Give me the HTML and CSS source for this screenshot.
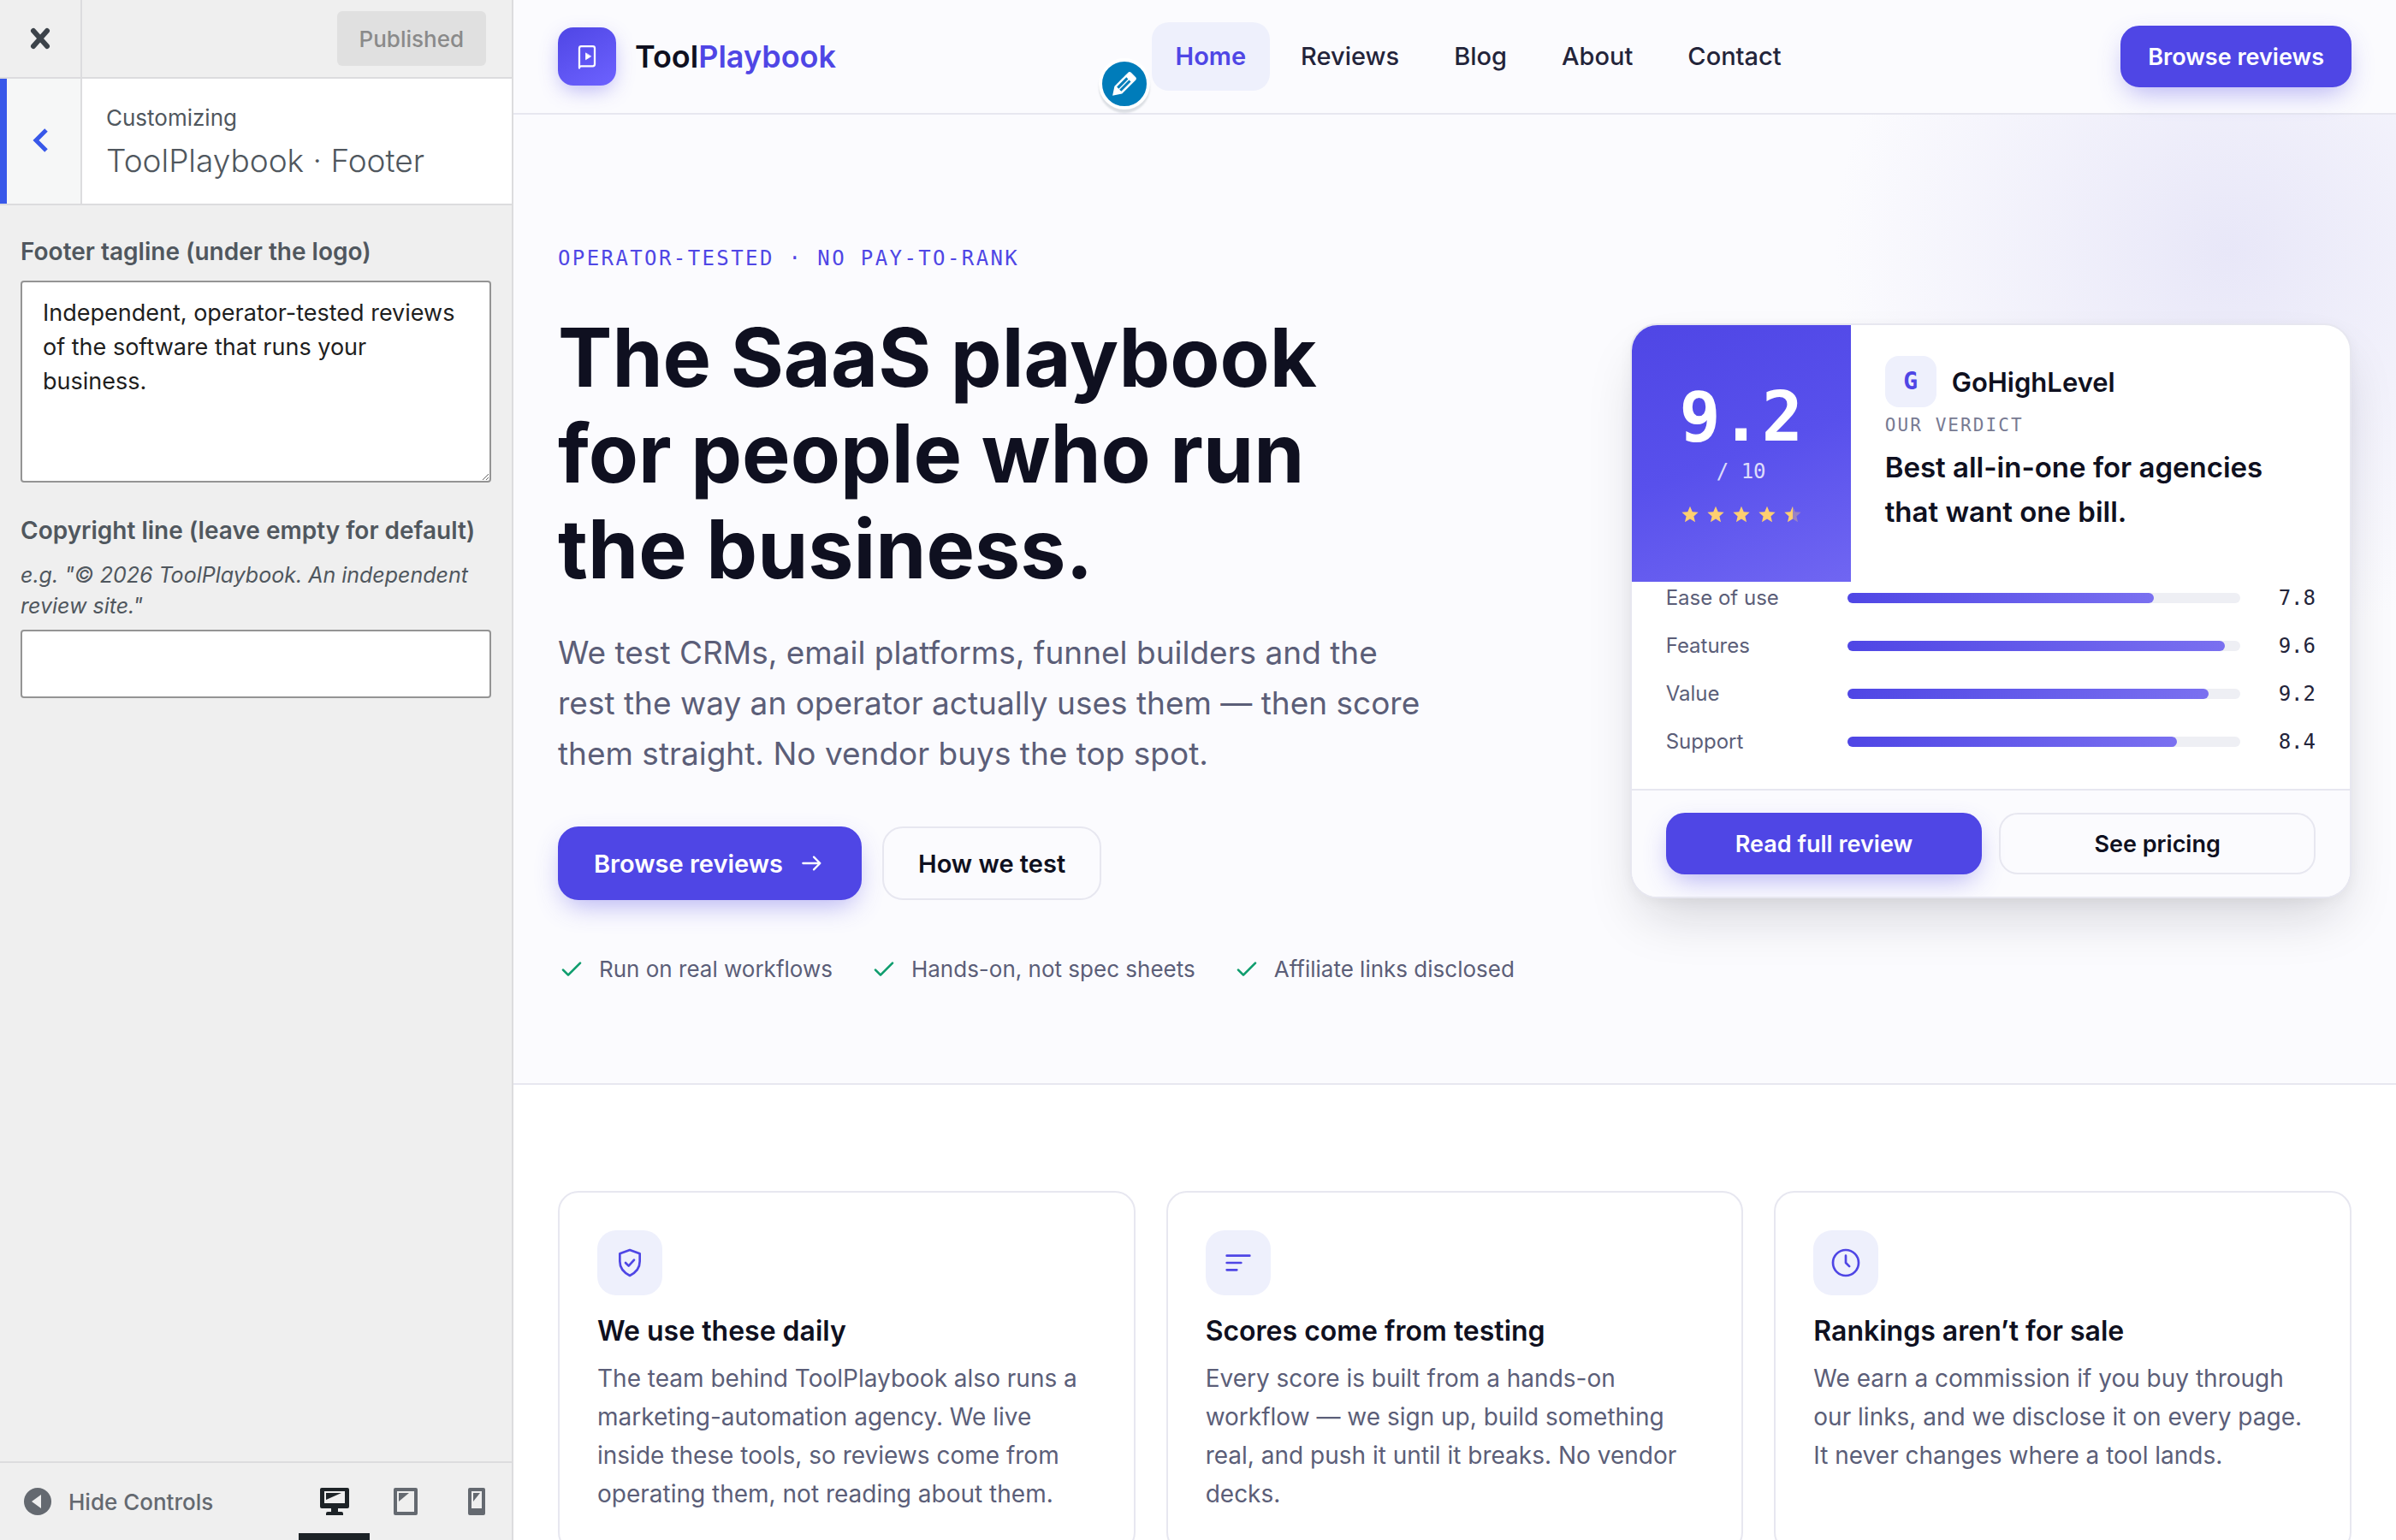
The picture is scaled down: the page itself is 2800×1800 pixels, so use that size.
FILE: index.html
```html
<!DOCTYPE html>
<html lang="en">
<head>
    <meta charset="UTF-8">
    <meta name="viewport" content="width=device-width, initial-scale=1.0">
    <title>Customize: ToolPlaybook</title>
    <link rel="stylesheet" href="styles.css">
</head>
<body>

    <!-- Customizer sidebar -->
    <aside class="controls">
        <div class="controls-top">
            <button type="button" class="close-btn" aria-label="Close">
                <svg width="26" height="28" viewBox="0 0 26 28"><path d="M5 5l16 18M21 5L5 23" stroke="currentColor" stroke-width="6" stroke-linecap="round" fill="none"/></svg>
            </button>
            <button type="button" class="publish-btn" disabled>Published</button>
        </div>

        <div class="section-head">
            <button type="button" class="back-btn" aria-label="Back">
                <svg width="20" height="30" viewBox="0 0 20 30"><path d="M17 3L5 15l12 12" stroke="currentColor" stroke-width="5" fill="none"/></svg>
            </button>
            <div class="section-title">
                <span>Customizing</span>
                <h3>ToolPlaybook · Footer</h3>
            </div>
        </div>

        <form class="fields">
            <div class="field">
                <label for="tagline">Footer tagline (under the logo)</label>
                <textarea id="tagline">Independent, operator-tested reviews of the software that runs your business.</textarea>
            </div>
            <div class="field">
                <label for="copyright">Copyright line (leave empty for default)</label>
                <p class="hint">e.g. "© 2026 ToolPlaybook. An independent review site."</p>
                <input type="text" id="copyright">
            </div>
        </form>

        <div class="controls-footer">
            <button type="button" class="collapse-btn">
                <svg width="32" height="32" viewBox="0 0 32 32"><circle cx="16" cy="16" r="16" fill="currentColor"/><path d="M20 8v16L9 16z" fill="#efefef"/></svg>
                Hide Controls
            </button>
            <div class="devices">
                <button type="button" class="device active" aria-label="Desktop preview">
                    <svg width="34" height="32" viewBox="0 0 34 32"><path fill="currentColor" fill-rule="evenodd" d="M2 0h30q2 0 2 2v20q0 2-2 2H21v4h4q2 0 2 2v2H7v-2q0-2 2-2h4v-4H2q-2 0-2-2V2q0-2 2-2zM5 4v14h24V4z"/><path fill="currentColor" d="M7 6h18L7 14z"/></svg>
                </button>
                <button type="button" class="device" aria-label="Tablet preview">
                    <svg width="28" height="32" viewBox="0 0 28 32"><path fill="currentColor" fill-rule="evenodd" d="M2 0h24q2 0 2 2v28q0 2-2 2H2q-2 0-2-2V2q0-2 2-2zM4 4v24h20V4z"/><path fill="currentColor" d="M6 6h12L6 16z"/></svg>
                </button>
                <button type="button" class="device" aria-label="Mobile preview">
                    <svg width="20" height="32" viewBox="0 0 20 32"><path fill="currentColor" fill-rule="evenodd" d="M2 0h16q2 0 2 2v28q0 2-2 2H2q-2 0-2-2V2q0-2 2-2zM4 4v20h12V4z"/><path fill="currentColor" d="M6 6h8L6 16z"/></svg>
                </button>
            </div>
        </div>
    </aside>

    <!-- Site preview -->
    <div class="preview">
        <header class="site-header">
            <a href="#" class="brand">
                <span class="brand-mark">
                    <svg width="36" height="36" viewBox="0 0 24 24" fill="none" stroke="#fff" stroke-width="1.500" stroke-linecap="round" stroke-linejoin="round"><path d="M6 21V5.500A1.500 1.500 0 0 1 7.500 4h9A1.500 1.500 0 0 1 18 5.500V18a1.500 1.500 0 0 1-1.500 1.500h-9A1.500 1.500 0 0 0 6 21z"/><path d="M11 9.500v5l4-2.500z" fill="#fff" stroke-width=".500"/></svg>
                </span>
                <span class="brand-name">Tool<b>Playbook</b></span>
            </a>
            <nav class="site-nav">
                <button type="button" class="edit-badge" aria-label="Edit menu">
                    <svg width="40" height="40" viewBox="0 0 20 20"><path fill="#fff" d="M13.890 3.390l2.710 2.720c.46.46.42 1.240.03 1.640l-8.010 8.020-5.560 1.160 1.160-5.580s7.600-7.630 7.990-8.030c.39-.39 1.220-.39 1.680.07zm-2.730 2.790l-5.590 5.610 1.110 1.110 5.540-5.650zm-2.970 8.230l5.580-5.600-1.070-1.080-5.590 5.600z"/></svg>
                </button>
                <a href="#" class="current">Home</a>
                <a href="#">Reviews</a>
                <a href="#">Blog</a>
                <a href="#">About</a>
                <a href="#">Contact</a>
            </nav>
            <a href="#" class="btn btn-primary">Browse reviews</a>
        </header>

        <section class="hero">
            <div class="hero-copy">
                <p class="eyebrow">Operator-tested · No pay-to-rank</p>
                <h1>The SaaS playbook<br>for people who run<br>the business.</h1>
                <p class="lead">We test CRMs, email platforms, funnel builders and the rest the way an operator actually uses them — then score them straight. No vendor buys the top spot.</p>
                <div class="hero-actions">
                    <a href="#" class="btn btn-primary btn-lg">Browse reviews
                        <svg width="32" height="32" viewBox="0 0 24 24" fill="none" stroke="currentColor" stroke-width="1.700" stroke-linecap="round" stroke-linejoin="round"><path d="M4 12h15M13.500 6.500L19 12l-5.500 5.500"/></svg>
                    </a>
                    <a href="#" class="btn btn-outline btn-lg">How we test</a>
                </div>
                <ul class="proof">
                    <li><svg width="32" height="32" viewBox="0 0 24 24"><path d="M4.500 12.500l4.500 4.500L19.500 6.500"/></svg>Run on real workflows</li>
                    <li><svg width="32" height="32" viewBox="0 0 24 24"><path d="M4.500 12.500l4.500 4.500L19.500 6.500"/></svg>Hands-on, not spec sheets</li>
                    <li><svg width="32" height="32" viewBox="0 0 24 24"><path d="M4.500 12.500l4.500 4.500L19.500 6.500"/></svg>Affiliate links disclosed</li>
                </ul>
            </div>

            <article class="verdict">
                <div class="verdict-top">
                    <div class="score">
                        <strong>9.2</strong>
                        <span>/ 10</span>
                        <div class="stars">
                            <svg viewBox="0 0 24 24"><path d="M12 2l3 7 7.500.600-5.700 5 1.800 7.400-6.600-4-6.600 4 1.800-7.400-5.700-5L9 9z"/></svg>
                            <svg viewBox="0 0 24 24"><path d="M12 2l3 7 7.500.600-5.700 5 1.800 7.400-6.600-4-6.600 4 1.800-7.400-5.700-5L9 9z"/></svg>
                            <svg viewBox="0 0 24 24"><path d="M12 2l3 7 7.500.600-5.700 5 1.800 7.400-6.600-4-6.600 4 1.800-7.400-5.700-5L9 9z"/></svg>
                            <svg viewBox="0 0 24 24"><path d="M12 2l3 7 7.500.600-5.700 5 1.800 7.400-6.600-4-6.600 4 1.800-7.400-5.700-5L9 9z"/></svg>
                            <svg viewBox="0 0 24 24"><path opacity=".35" d="M12 2l3 7 7.500.600-5.700 5 1.800 7.400-6.600-4z"/><path d="M12 2v16l-6.600 4 1.800-7.400-5.700-5L9 9z"/></svg>
                        </div>
                    </div>
                    <div class="verdict-body">
                        <div class="tool"><span class="tool-logo">G</span><span class="tool-name">GoHighLevel</span></div>
                        <p class="verdict-label">Our verdict</p>
                        <p class="verdict-text">Best all-in-one for agencies<br>that want one bill.</p>
                    </div>
                </div>
                <div class="ratings">
                    <div class="rating"><span>Ease of use</span><div class="bar"><i style="width: 78%"></i></div><b>7.8</b></div>
                    <div class="rating"><span>Features</span><div class="bar"><i style="width: 96%"></i></div><b>9.6</b></div>
                    <div class="rating"><span>Value</span><div class="bar"><i style="width: 92%"></i></div><b>9.2</b></div>
                    <div class="rating"><span>Support</span><div class="bar"><i style="width: 84%"></i></div><b>8.4</b></div>
                </div>
                <div class="verdict-actions">
                    <a href="#" class="btn btn-primary">Read full review</a>
                    <a href="#" class="btn btn-outline">See pricing</a>
                </div>
            </article>
        </section>

        <section class="features">
            <article class="feature">
                <div class="feature-icon">
                    <svg viewBox="0 0 24 24"><path d="M12 3l7 2.600v5.400c0 4.600-2.900 8-7 10-4.100-2-7-5.400-7-10V5.600z"/><path d="M9 12l2.200 2.200L15 10"/></svg>
                </div>
                <h3>We use these daily</h3>
                <p>The team behind ToolPlaybook also runs a marketing-automation agency. We live inside these tools, so reviews come from operating them, not reading about them.</p>
            </article>
            <article class="feature">
                <div class="feature-icon">
                    <svg viewBox="0 0 24 24"><path d="M4 7h16M4 12h10M4 17h7"/></svg>
                </div>
                <h3>Scores come from testing</h3>
                <p>Every score is built from a hands-on workflow — we sign up, build something real, and push it until it breaks. No vendor decks.</p>
            </article>
            <article class="feature">
                <div class="feature-icon">
                    <svg viewBox="0 0 24 24"><circle cx="12" cy="12" r="9"/><path d="M12 7v5l2.500 2.500"/></svg>
                </div>
                <h3>Rankings aren’t for sale</h3>
                <p>We earn a commission if you buy through our links, and we disclose it on every page. It never changes where a tool lands.</p>
            </article>
        </section>
    </div>

</body>
</html>
```

FILE: styles.css
```css
/* General Styles */
* {
    box-sizing: border-box;
}

body {
    margin: 0;
    height: 100vh;
    display: flex;
    overflow: hidden;
    font-family: Inter, "Liberation Sans", sans-serif;
    color: #0f1020;
}

h1, h3, p, ul {
    margin: 0;
    padding: 0;
}

a {
    color: inherit;
    text-decoration: none;
}

button {
    border: 0;
    padding: 0;
    background: none;
    font-family: inherit;
    cursor: pointer;
}

svg {
    display: block;
    flex: none;
}

/* Customizer sidebar */
.controls {
    width: 600px;
    flex: none;
    display: flex;
    flex-direction: column;
    background: #efefef;
    border-right: 2px solid #dcdcde;
    color: #50575e;
}

.controls-top {
    height: 92px;
    display: flex;
    align-items: center;
    justify-content: space-between;
    padding-right: 30px;
    border-bottom: 2px solid #dcdcde;
}

.close-btn,
.back-btn {
    width: 96px;
    align-self: stretch;
    display: flex;
    align-items: center;
    justify-content: center;
    border-right: 2px solid #dcdcde;
    color: #3c434a;
}

.back-btn {
    border-left: 8px solid #3858e9;
    background: #f6f7f7;
    color: #3858e9;
    padding: 0 8px 2px 0;
}

.publish-btn {
    height: 64px;
    padding: 0 26px;
    border-radius: 6px;
    background: #e0e0e0;
    color: #8a8a8a;
    font-size: 26px;
    font-weight: 500;
}

.section-head {
    height: 148px;
    display: flex;
    background: #fff;
    border-bottom: 2px solid #dcdcde;
}

.section-title {
    padding: 26px 28px;
    font-size: 26px;
    line-height: 40px;
}

.section-title h3 {
    font-size: 37px;
    line-height: 60px;
    font-weight: 300;
}

.fields {
    flex: 1;
    padding: 32px 24px;
    display: flex;
    flex-direction: column;
    gap: 34px;
}

.field {
    display: flex;
    flex-direction: column;
}

.field label {
    font-size: 28px;
    line-height: 44px;
    font-weight: 600;
    margin-bottom: 12px;
}

.field textarea,
.field input {
    border: 2px solid #949494;
    border-radius: 4px;
    background: #fff;
    font-family: inherit;
    font-size: 27px;
    line-height: 40px;
    color: #1e1e1e;
}

.field textarea {
    height: 236px;
    padding: 16px 24px;
}

.field input {
    height: 80px;
    padding: 0 24px;
}

.hint {
    margin-bottom: 10px;
    font-size: 25px;
    line-height: 36px;
    font-style: italic;
}

.controls-footer {
    height: 92px;
    display: flex;
    justify-content: space-between;
    border-top: 2px solid #dcdcde;
    color: #646970;
}

.collapse-btn {
    display: flex;
    align-items: center;
    gap: 20px;
    padding-left: 28px;
    font-size: 26px;
    font-weight: 500;
    color: inherit;
}

.devices {
    display: flex;
}

.device {
    width: 83px;
    display: flex;
    align-items: center;
    justify-content: center;
    color: #646970;
    border-bottom: 8px solid transparent;
    padding-top: 8px;
}

.device.active {
    color: #1d2327;
    border-color: #1d2327;
}

/* Buttons */
.btn {
    display: inline-flex;
    align-items: center;
    justify-content: center;
    gap: 18px;
    height: 72px;
    padding: 0 30px;
    border: 2px solid transparent;
    border-radius: 22px;
    font-size: 27px;
    font-weight: 600;
    white-space: nowrap;
}

.btn-lg {
    height: 86px;
    padding: 0 40px;
    border-radius: 24px;
    font-size: 29px;
}

.btn-primary {
    border-color: #4f46e5;
    background: #4f46e5;
    color: #fff;
    box-shadow: 0 12px 32px -8px rgba(79, 70, 229, 0.45);
}

.btn-outline {
    border-color: #e7e7f0;
}

/* Site header */
.preview {
    flex: 1;
    min-width: 0;
    overflow: hidden;
    background: #fff;
}

.site-header {
    height: 134px;
    padding: 0 52px;
    display: flex;
    align-items: center;
    justify-content: space-between;
    background: #fbfbfe;
    border-bottom: 2px solid #e7e7f0;
}

.brand {
    display: flex;
    align-items: center;
    gap: 22px;
}

.brand-mark {
    width: 68px;
    height: 68px;
    display: flex;
    align-items: center;
    justify-content: center;
    border-radius: 18px;
    background: linear-gradient(150deg, #4f46e5, #6d62ff);
    box-shadow: 0 8px 24px -4px rgba(79, 70, 229, 0.4);
}

.brand-name {
    font-size: 36px;
    font-weight: 600;
}

.brand-name b {
    font-weight: 600;
    color: #4f46e5;
}

.site-nav {
    position: relative;
    display: flex;
    gap: 8px;
}

.site-nav a {
    padding: 0 28px;
    line-height: 80px;
    border-radius: 20px;
    font-size: 29px;
    font-weight: 500;
    color: #23243a;
}

.site-nav a.current {
    background: #eef0fc;
    font-weight: 600;
    color: #4f46e5;
}

.edit-badge {
    position: absolute;
    left: -62px;
    top: 42px;
    width: 60px;
    height: 60px;
    display: flex;
    align-items: center;
    justify-content: center;
    border: 4px solid #fff;
    border-radius: 50%;
    background: #007cba;
    box-shadow: 0 4px 2px rgba(46, 68, 83, 0.15);
}

/* Hero */
.hero {
    padding: 142px 52px 114px;
    display: grid;
    grid-template-columns: 1.4fr 1fr;
    gap: 72px;
    align-items: center;
    border-bottom: 2px solid #e7e7f0;
    background: radial-gradient(circle at calc(100% - 196px) 160px, #e8e7f8, rgba(251, 251, 254, 0) 460px) #fbfbfe;
}

.eyebrow {
    margin-bottom: 34px;
    font-family: "DejaVu Sans Mono", monospace;
    font-size: 24px;
    line-height: 52px;
    letter-spacing: 0.1em;
    text-transform: uppercase;
    color: #4f46e5;
}

h1 {
    font-size: 95px;
    line-height: 112px;
    font-weight: 700;
}

.lead {
    max-width: 1020px;
    margin-top: 35px;
    font-size: 37px;
    line-height: 59px;
    color: #5b5e78;
}

.hero-actions {
    display: flex;
    gap: 24px;
    margin-top: 56px;
}

.proof {
    margin-top: 62px;
    display: flex;
    gap: 44px;
    list-style: none;
    font-size: 26px;
    line-height: 38px;
    color: #5b5e78;
}

.proof li {
    display: flex;
    align-items: center;
    gap: 16px;
}

.proof svg {
    fill: none;
    stroke: #0f9d6e;
    stroke-width: 2;
    stroke-linecap: round;
    stroke-linejoin: round;
}

/* Verdict card */
.verdict {
    border: 2px solid #e7e7f0;
    border-radius: 32px;
    overflow: hidden;
    background: #fff;
    box-shadow: 0 32px 64px -16px rgba(15, 16, 32, 0.18), 0 4px 16px rgba(15, 16, 32, 0.04);
}

.verdict-top {
    display: flex;
}

.score {
    width: 256px;
    padding: 68px 0;
    display: flex;
    flex-direction: column;
    align-items: center;
    background: linear-gradient(160deg, #4f46e5, #5850ec 50%, #7066f2);
    font-family: "DejaVu Sans Mono", monospace;
    color: #fff;
}

.score strong {
    font-size: 80px;
    line-height: 80px;
}

.score span {
    margin-top: 4px;
    font-size: 24px;
    line-height: 38px;
    opacity: 0.8;
}

.stars {
    display: flex;
    gap: 8px;
    margin-top: 20px;
}

.stars svg {
    width: 22px;
    height: 22px;
    fill: #ffcf70;
}

.verdict-body {
    flex: 1;
    padding: 36px 40px;
}

.tool {
    display: flex;
    align-items: center;
    gap: 18px;
}

.tool-logo {
    width: 60px;
    border-radius: 16px;
    background: #eef0fc;
    color: #4f46e5;
    font-family: "DejaVu Sans Mono", monospace;
    font-size: 28px;
    line-height: 60px;
    font-weight: 700;
    text-align: center;
}

.tool-name {
    font-size: 31px;
    font-weight: 600;
}

.verdict-label {
    margin-top: 4px;
    font-family: "DejaVu Sans Mono", monospace;
    font-size: 21px;
    line-height: 34px;
    letter-spacing: 0.1em;
    text-transform: uppercase;
    color: #777a92;
}

.verdict-text {
    margin-top: 6px;
    font-size: 33px;
    line-height: 52px;
    font-weight: 600;
}

.ratings {
    display: flex;
    flex-direction: column;
    gap: 18px;
    padding: 0 40px 36px;
}

.rating {
    display: grid;
    grid-template-columns: 180px 1fr 56px;
    gap: 32px;
    align-items: center;
    font-size: 24px;
    line-height: 38px;
    color: #5b5e78;
}

.rating b {
    font-family: "DejaVu Sans Mono", monospace;
    font-weight: 400;
    text-align: right;
    color: #23243a;
}

.bar {
    height: 12px;
    border-radius: 6px;
    background: #eeeff4;
}

.bar i {
    display: block;
    height: 12px;
    border-radius: 6px;
    background: linear-gradient(90deg, #4f46e5, #7a70f0);
}

.verdict-actions {
    display: grid;
    grid-template-columns: 1fr 1fr;
    gap: 20px;
    padding: 26px 40px;
    border-top: 2px solid #e7e7f0;
    background: #fbfbfe;
}

/* Feature cards */
.features {
    padding: 124px 52px;
    display: grid;
    grid-template-columns: repeat(3, 1fr);
    gap: 36px;
}

.feature {
    padding: 44px;
    border: 2px solid #e7e7f0;
    border-radius: 24px;
}

.feature-icon {
    width: 76px;
    height: 76px;
    display: flex;
    align-items: center;
    justify-content: center;
    border-radius: 22px;
    background: #eef0fc;
}

.feature-icon svg {
    width: 40px;
    height: 40px;
    fill: none;
    stroke: #4f46e5;
    stroke-width: 1.6;
    stroke-linecap: round;
    stroke-linejoin: round;
}

.feature h3 {
    margin-top: 20px;
    font-size: 32px;
    line-height: 44px;
    font-weight: 600;
}

.feature p {
    margin-top: 11px;
    font-size: 28px;
    line-height: 45px;
    color: #5b5e78;
}
```
